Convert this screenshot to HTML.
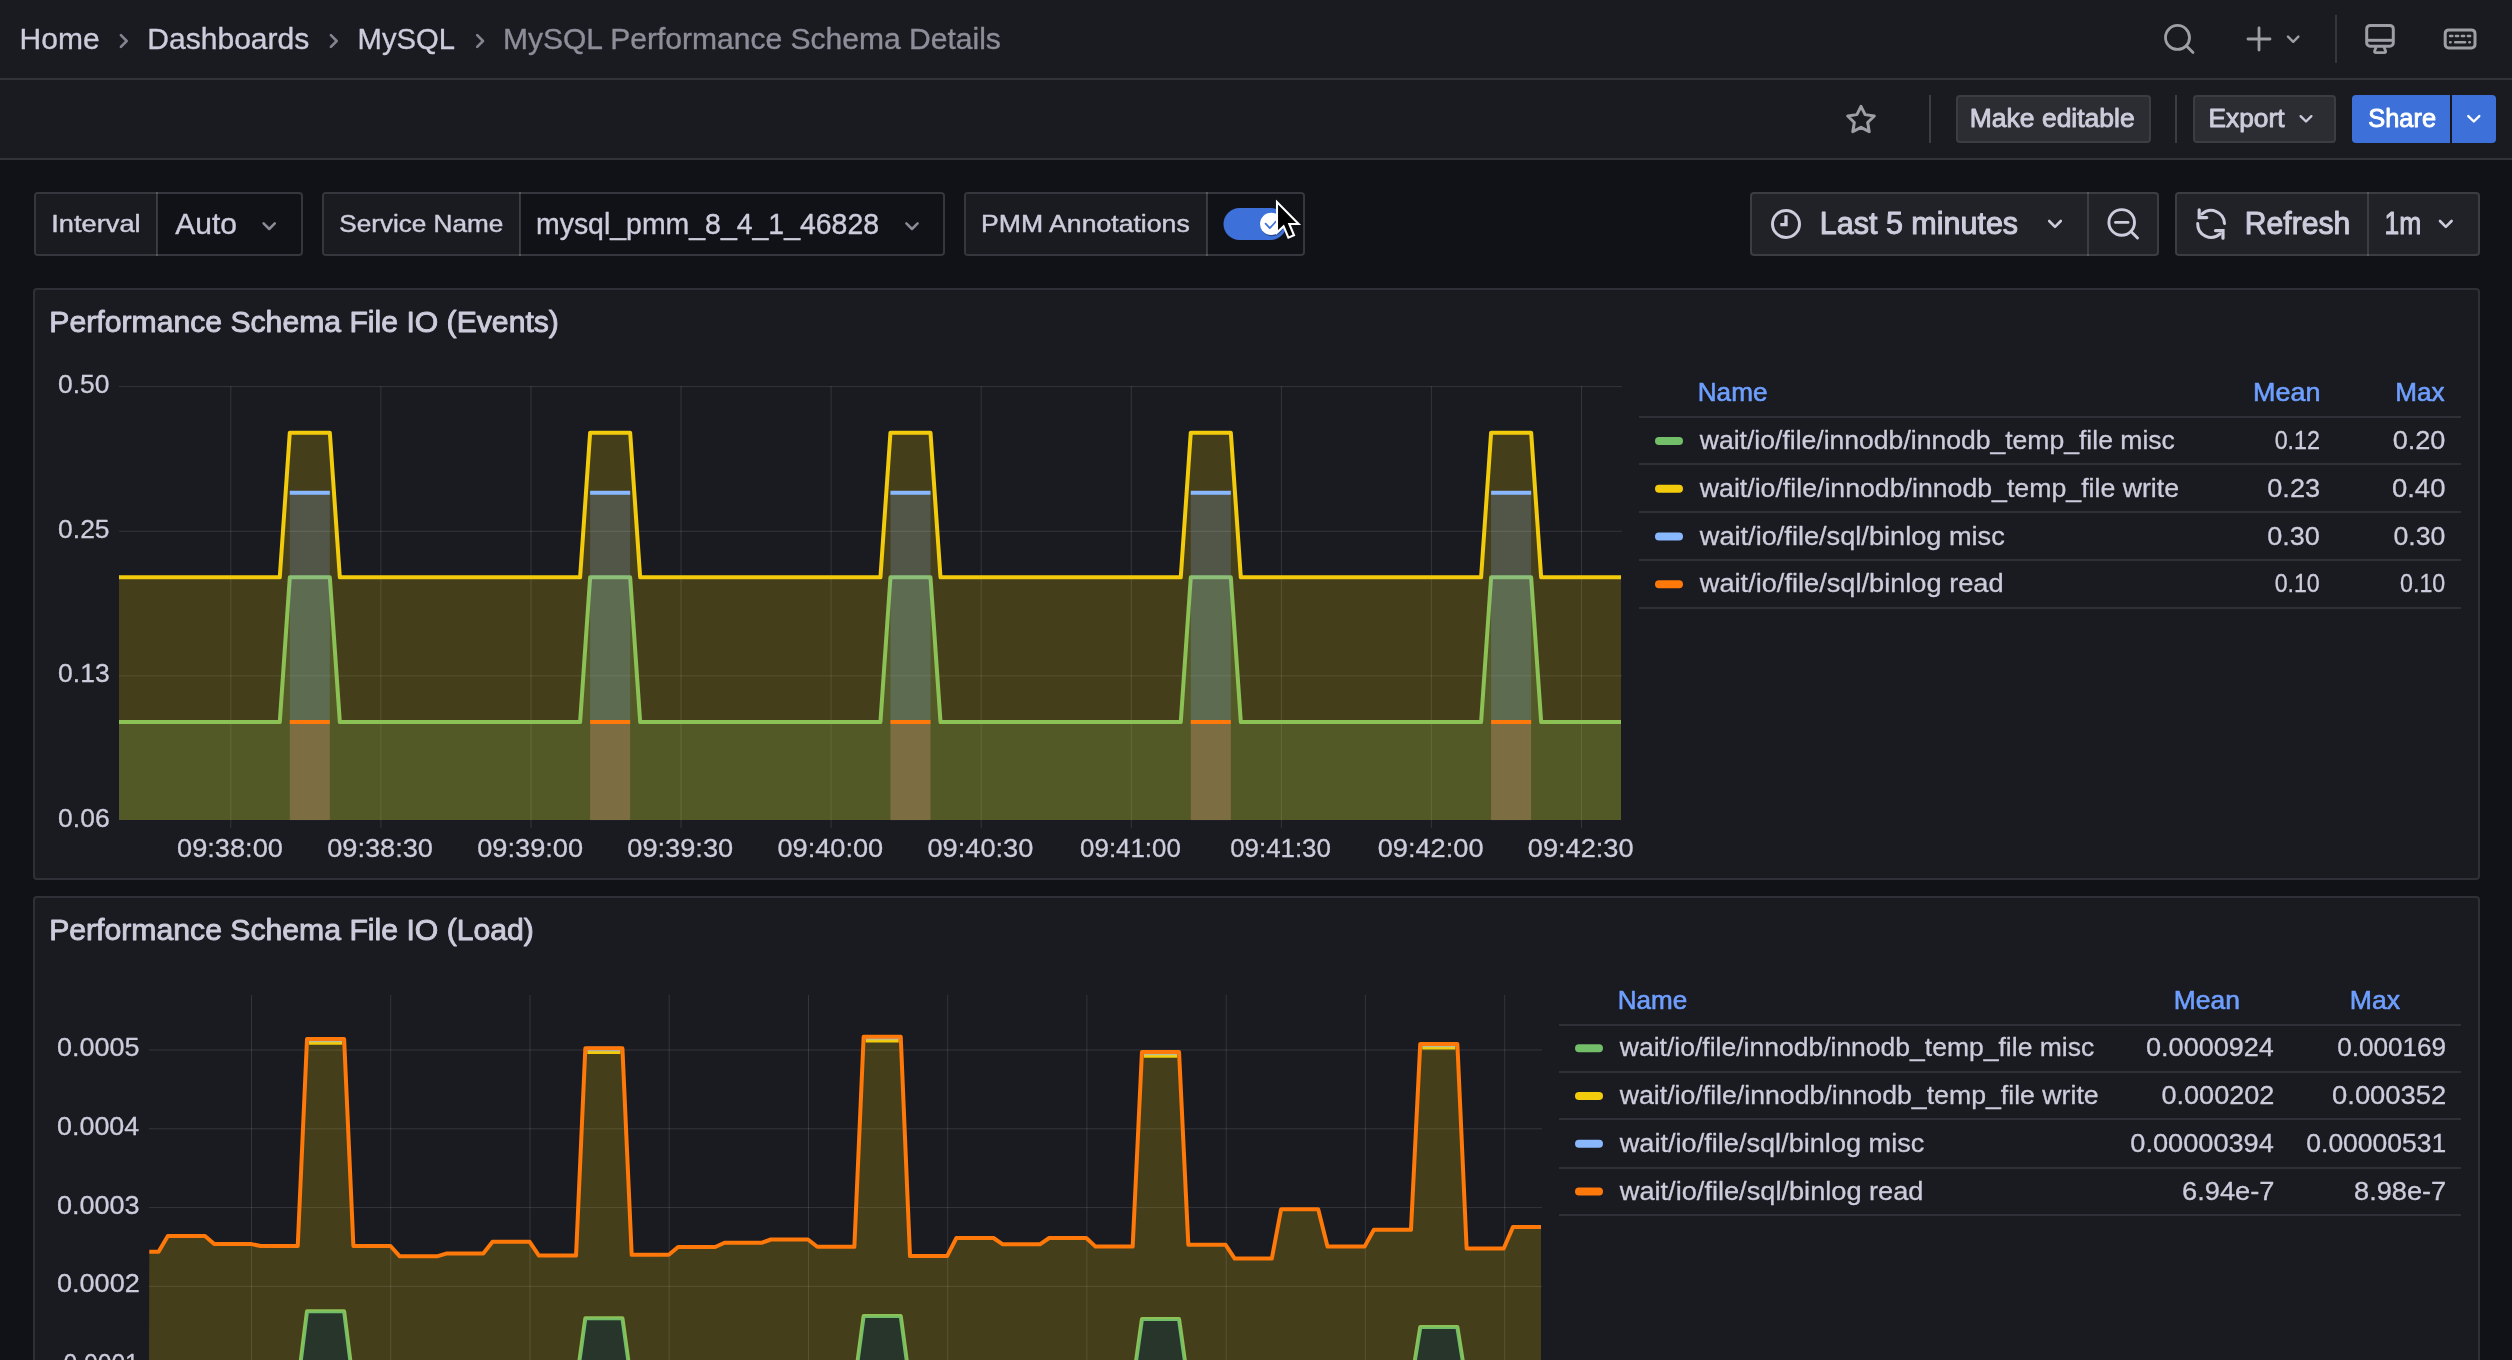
<!DOCTYPE html>
<html><head><meta charset="utf-8"><title>MySQL Performance Schema Details</title>
<style>
html,body{margin:0;padding:0;width:2512px;height:1360px;overflow:hidden;background:#111217;font-family:"Liberation Sans",sans-serif}
.a{position:absolute}
svg{position:absolute;left:0;top:0;will-change:transform}
text{font-family:"Liberation Sans",sans-serif}
</style></head><body>
<div class="a" style="left:0.0px;top:0.0px;width:2512.0px;height:78.0px;background:#1a1b20;"></div>
<div class="a" style="left:0.0px;top:78.0px;width:2512.0px;height:2.0px;background:#323339;"></div>
<div class="a" style="left:0.0px;top:80.0px;width:2512.0px;height:78.0px;background:#1a1b20;"></div>
<div class="a" style="left:0.0px;top:158.0px;width:2512.0px;height:2.0px;background:#323339;"></div>
<div class="a" style="left:2335.0px;top:15.0px;width:1.5px;height:48.0px;background:rgba(204,204,220,0.16);"></div>
<div class="a" style="left:1929.0px;top:95.0px;width:2.0px;height:48.0px;background:rgba(204,204,220,0.2);"></div>
<div class="a" style="left:1955.5px;top:95.0px;width:195.0px;height:48.0px;background:#2b2d32;border:2px solid rgba(204,204,220,0.10);box-sizing:border-box;border-radius:4px;"></div>
<div class="a" style="left:2175.0px;top:95.0px;width:2.0px;height:48.0px;background:rgba(204,204,220,0.2);"></div>
<div class="a" style="left:2193.0px;top:95.0px;width:143.0px;height:48.0px;background:#2b2d32;border:2px solid rgba(204,204,220,0.10);box-sizing:border-box;border-radius:4px;"></div>
<div class="a" style="left:2352.0px;top:95.0px;width:144.0px;height:48.0px;background:#3d71d9;border-radius:4px;"></div>
<div class="a" style="left:2450.0px;top:95.0px;width:2.0px;height:48.0px;background:#16181d;"></div>
<div class="a" style="left:34.0px;top:192.0px;width:269.0px;height:64.0px;background:#111217;border:2px solid rgba(204,204,220,0.2);box-sizing:border-box;border-radius:4px;"></div>
<div class="a" style="left:36.0px;top:194.0px;width:121.0px;height:60.0px;background:#1a1b20;border-radius:3px 0 0 3px;"></div>
<div class="a" style="left:156.0px;top:192.0px;width:2.0px;height:64.0px;background:rgba(204,204,220,0.2);"></div>
<div class="a" style="left:321.6px;top:192.0px;width:623.6px;height:64.0px;background:#111217;border:2px solid rgba(204,204,220,0.2);box-sizing:border-box;border-radius:4px;"></div>
<div class="a" style="left:323.6px;top:194.0px;width:196.4px;height:60.0px;background:#1a1b20;border-radius:3px 0 0 3px;"></div>
<div class="a" style="left:519.0px;top:192.0px;width:2.0px;height:64.0px;background:rgba(204,204,220,0.2);"></div>
<div class="a" style="left:964.3px;top:192.0px;width:341.1px;height:64.0px;background:#111217;border:2px solid rgba(204,204,220,0.2);box-sizing:border-box;border-radius:4px;"></div>
<div class="a" style="left:966.3px;top:194.0px;width:240.4px;height:60.0px;background:#1a1b20;border-radius:3px 0 0 3px;"></div>
<div class="a" style="left:1205.7px;top:192.0px;width:2.0px;height:64.0px;background:rgba(204,204,220,0.2);"></div>
<div class="a" style="left:1750.0px;top:192.0px;width:409.0px;height:64.0px;background:#202227;border:2px solid rgba(204,204,220,0.16);box-sizing:border-box;border-radius:4px;"></div>
<div class="a" style="left:2087.0px;top:192.0px;width:2.0px;height:64.0px;background:rgba(204,204,220,0.16);"></div>
<div class="a" style="left:2175.0px;top:192.0px;width:305.0px;height:64.0px;background:#202227;border:2px solid rgba(204,204,220,0.16);box-sizing:border-box;border-radius:4px;"></div>
<div class="a" style="left:2367.0px;top:192.0px;width:2.0px;height:64.0px;background:rgba(204,204,220,0.16);"></div>
<div class="a" style="left:33.0px;top:288.0px;width:2447.0px;height:592.0px;background:#1a1b20;border:2px solid rgba(204,204,220,0.12);box-sizing:border-box;border-radius:4px;"></div>
<div class="a" style="left:33.0px;top:896.0px;width:2447.0px;height:504.0px;background:#1a1b20;border:2px solid rgba(204,204,220,0.12);box-sizing:border-box;border-radius:4px;"></div>
<div class="a" style="left:1639.0px;top:415.5px;width:822.0px;height:2.0px;background:rgba(204,204,220,0.12);"></div>
<div class="a" style="left:1639.0px;top:463.2px;width:822.0px;height:2.0px;background:rgba(204,204,220,0.12);"></div>
<div class="a" style="left:1639.0px;top:511.0px;width:822.0px;height:2.0px;background:rgba(204,204,220,0.12);"></div>
<div class="a" style="left:1639.0px;top:559.0px;width:822.0px;height:2.0px;background:rgba(204,204,220,0.12);"></div>
<div class="a" style="left:1639.0px;top:607.0px;width:822.0px;height:2.0px;background:rgba(204,204,220,0.12);"></div>
<div class="a" style="left:1559.0px;top:1023.8px;width:902.0px;height:2.0px;background:rgba(204,204,220,0.12);"></div>
<div class="a" style="left:1559.0px;top:1070.5px;width:902.0px;height:2.0px;background:rgba(204,204,220,0.12);"></div>
<div class="a" style="left:1559.0px;top:1118.4px;width:902.0px;height:2.0px;background:rgba(204,204,220,0.12);"></div>
<div class="a" style="left:1559.0px;top:1166.7px;width:902.0px;height:2.0px;background:rgba(204,204,220,0.12);"></div>
<div class="a" style="left:1559.0px;top:1214.2px;width:902.0px;height:2.0px;background:rgba(204,204,220,0.12);"></div>
<svg width="2512" height="1360" viewBox="0 0 2512 1360">
<text x="19.62" y="48.90" font-size="30.00" fill="#ccccdc" stroke="#ccccdc" stroke-width="0.35" stroke-linejoin="round" textLength="79.94" lengthAdjust="spacingAndGlyphs">Home</text>
<text x="147.31" y="48.90" font-size="30.00" fill="#ccccdc" stroke="#ccccdc" stroke-width="0.35" stroke-linejoin="round" textLength="162.00" lengthAdjust="spacingAndGlyphs">Dashboards</text>
<text x="357.58" y="48.90" font-size="30.00" fill="#ccccdc" stroke="#ccccdc" stroke-width="0.35" stroke-linejoin="round" textLength="97.42" lengthAdjust="spacingAndGlyphs">MySQL</text>
<text x="502.92" y="48.90" font-size="30.00" fill="#8e8e9a" stroke="#8e8e9a" stroke-width="0.35" stroke-linejoin="round" textLength="497.99" lengthAdjust="spacingAndGlyphs">MySQL Performance Schema Details</text>
<path d="M120.9 35.2 L126.7 41 L120.9 46.8" fill="none" stroke="rgba(204,204,220,0.6)" stroke-width="2.6" stroke-linecap="round" stroke-linejoin="round"/>
<path d="M330.9 35.2 L336.7 41 L330.9 46.8" fill="none" stroke="rgba(204,204,220,0.6)" stroke-width="2.6" stroke-linecap="round" stroke-linejoin="round"/>
<path d="M477.2 35.2 L483.0 41 L477.2 46.8" fill="none" stroke="rgba(204,204,220,0.6)" stroke-width="2.6" stroke-linecap="round" stroke-linejoin="round"/>
<circle cx="2177.5" cy="37.4" r="12" fill="none" stroke="#9d9ea6" stroke-width="2.8"/>
<path d="M2186.5 46 L2193 52.5" stroke="#9d9ea6" stroke-width="2.8" stroke-linecap="round"/>
<path d="M2259 28 V50 M2248 39 H2270" stroke="#9d9ea6" stroke-width="2.8" stroke-linecap="round"/>
<path d="M2288 36.6 L2293.2 41.8 L2298.4 36.6" fill="none" stroke="#9d9ea6" stroke-width="2.4" stroke-linecap="round" stroke-linejoin="round"/>
<rect x="2366.7" y="25.4" width="26.6" height="20.9" rx="3.5" fill="none" stroke="#9d9ea6" stroke-width="3"/>
<path d="M2367.5 40.3 H2392.5" stroke="#9d9ea6" stroke-width="3"/>
<path d="M2376.2 47 L2374.6 51 Q2374.2 52.6 2375.8 52.6 H2384.4 Q2386 52.6 2385.6 51 L2384 47" fill="none" stroke="#9d9ea6" stroke-width="2.8" stroke-linejoin="round"/>
<rect x="2445.2" y="29.9" width="29.8" height="18" rx="3.5" fill="none" stroke="#9d9ea6" stroke-width="3"/>
<path d="M2450.1 36 H2452.3" stroke="#9d9ea6" stroke-width="2.6" stroke-linecap="round"/>
<path d="M2455.9 36 H2458.1" stroke="#9d9ea6" stroke-width="2.6" stroke-linecap="round"/>
<path d="M2461.9 36 H2464.1" stroke="#9d9ea6" stroke-width="2.6" stroke-linecap="round"/>
<path d="M2467.9 36 H2470.1" stroke="#9d9ea6" stroke-width="2.6" stroke-linecap="round"/>
<path d="M2450.2 42.2 H2450.6 M2455.2 42.2 H2465.1 M2469.4 42.2 H2469.8" stroke="#9d9ea6" stroke-width="2.6" stroke-linecap="round"/>
<polygon points="1861.00,106.30 1865.11,114.64 1874.31,115.97 1867.66,122.46 1869.23,131.63 1861.00,127.30 1852.77,131.63 1854.34,122.46 1847.69,115.97 1856.89,114.64" fill="none" stroke="#9d9ea6" stroke-width="3" stroke-linejoin="round"/>
<text x="1969.78" y="127.10" font-size="26.50" fill="#ccccdc" stroke="#ccccdc" stroke-width="0.90" stroke-linejoin="round" textLength="164.95" lengthAdjust="spacingAndGlyphs">Make editable</text>
<text x="2208.59" y="127.10" font-size="26.50" fill="#ccccdc" stroke="#ccccdc" stroke-width="0.90" stroke-linejoin="round" textLength="75.95" lengthAdjust="spacingAndGlyphs">Export</text>
<path d="M2300.6 116.1 L2306 121.5 L2311.4 116.1" fill="none" stroke="#ccccdc" stroke-width="2.3" stroke-linecap="round" stroke-linejoin="round"/>
<text x="2368.30" y="127.10" font-size="26.50" fill="#ffffff" stroke="#ffffff" stroke-width="0.90" stroke-linejoin="round" textLength="67.78" lengthAdjust="spacingAndGlyphs">Share</text>
<path d="M2468.3 116.1 L2473.8 121.5 L2479.3 116.1" fill="none" stroke="#ffffff" stroke-width="2.4" stroke-linecap="round" stroke-linejoin="round"/>
<text x="51.31" y="232.10" font-size="24.80" fill="#ccccdc" stroke="#ccccdc" stroke-width="0.45" stroke-linejoin="round" textLength="89.28" lengthAdjust="spacingAndGlyphs">Interval</text>
<text x="175.34" y="233.70" font-size="30.40" fill="#ccccdc" stroke="#ccccdc" stroke-width="0.40" stroke-linejoin="round" textLength="61.72" lengthAdjust="spacingAndGlyphs">Auto</text>
<path d="M263.60 223.40 L269.20 229.00 L274.80 223.40" fill="none" stroke="rgba(204,204,220,0.65)" stroke-width="2.50" stroke-linecap="round" stroke-linejoin="round"/>
<text x="339.24" y="232.20" font-size="24.80" fill="#ccccdc" stroke="#ccccdc" stroke-width="0.45" stroke-linejoin="round" textLength="164.10" lengthAdjust="spacingAndGlyphs">Service Name</text>
<text x="536.01" y="233.70" font-size="30.40" fill="#ccccdc" stroke="#ccccdc" stroke-width="0.40" stroke-linejoin="round" textLength="343.02" lengthAdjust="spacingAndGlyphs">mysql_pmm_8_4_1_46828</text>
<path d="M906.40 223.40 L912.00 229.00 L917.60 223.40" fill="none" stroke="rgba(204,204,220,0.65)" stroke-width="2.50" stroke-linecap="round" stroke-linejoin="round"/>
<text x="981.06" y="232.20" font-size="24.80" fill="#ccccdc" stroke="#ccccdc" stroke-width="0.45" stroke-linejoin="round" textLength="208.67" lengthAdjust="spacingAndGlyphs">PMM Annotations</text>
<rect x="1223.5" y="208" width="63" height="32" rx="16" fill="#3d71d9"/>
<circle cx="1272" cy="225" r="11.3" fill="rgba(0,0,0,0.35)"/>
<circle cx="1271.2" cy="223.9" r="11.1" fill="#ffffff"/>
<path d="M1265.6 223.7 L1269.8 228.2 L1275.9 221.5" fill="none" stroke="#3d71d9" stroke-width="1.8" stroke-linecap="round" stroke-linejoin="round"/>
<path d="M1277 202 L1277 232.5 L1283.6 226.2 L1288.4 237.6 L1294 235.3 L1289.3 224 L1298.6 224 Z" fill="#000" stroke="#fff" stroke-width="2.1" stroke-linejoin="miter"/>
<circle cx="1786" cy="224" r="13.5" fill="none" stroke="#ccccdc" stroke-width="3"/>
<path d="M1786 215.3 V224.6 H1780.3" fill="none" stroke="#ccccdc" stroke-width="3.3" stroke-linecap="butt" stroke-linejoin="miter"/>
<text x="1819.80" y="234.10" font-size="30.60" fill="#ccccdc" stroke="#ccccdc" stroke-width="1.00" stroke-linejoin="round" textLength="198.30" lengthAdjust="spacingAndGlyphs">Last 5 minutes</text>
<path d="M2049.20 221.00 L2055.00 226.80 L2060.80 221.00" fill="none" stroke="#ccccdc" stroke-width="2.60" stroke-linecap="round" stroke-linejoin="round"/>
<circle cx="2121.7" cy="222.4" r="12.8" fill="none" stroke="#ccccdc" stroke-width="2.9"/>
<path d="M2115.5 222.4 H2128" stroke="#ccccdc" stroke-width="2.9" stroke-linecap="round"/>
<path d="M2131 231.5 L2137.5 238" stroke="#ccccdc" stroke-width="2.9" stroke-linecap="round"/>
<path d="M2202.13 213.94 A13.4 13.4 0 0 1 2224.49 223.43" fill="none" stroke="#ccccdc" stroke-width="3" stroke-linecap="round"/>
<path d="M2197.71 223.43 A13.4 13.4 0 0 0 2220.07 233.86" fill="none" stroke="#ccccdc" stroke-width="3" stroke-linecap="round"/>
<path d="M2199.2 209.8 V217.6 H2206.8" fill="none" stroke="#ccccdc" stroke-width="3.2" stroke-linecap="round" stroke-linejoin="miter"/>
<path d="M2215.5 230.6 H2223 V238.2" fill="none" stroke="#ccccdc" stroke-width="3.2" stroke-linecap="round" stroke-linejoin="miter"/>
<text x="2244.83" y="234.10" font-size="30.60" fill="#ccccdc" stroke="#ccccdc" stroke-width="1.00" stroke-linejoin="round" textLength="105.53" lengthAdjust="spacingAndGlyphs">Refresh</text>
<text x="2384.48" y="234.10" font-size="30.60" fill="#ccccdc" stroke="#ccccdc" stroke-width="1.00" stroke-linejoin="round" textLength="36.76" lengthAdjust="spacingAndGlyphs">1m</text>
<path d="M2440.00 221.00 L2445.80 226.80 L2451.60 221.00" fill="none" stroke="#ccccdc" stroke-width="2.60" stroke-linecap="round" stroke-linejoin="round"/>
<text x="49.38" y="331.60" font-size="29.50" fill="#ccccdc" stroke="#ccccdc" stroke-width="0.90" stroke-linejoin="round" textLength="509.54" lengthAdjust="spacingAndGlyphs">Performance Schema File IO (Events)</text>
<text x="49.17" y="939.60" font-size="29.50" fill="#ccccdc" stroke="#ccccdc" stroke-width="0.90" stroke-linejoin="round" textLength="484.75" lengthAdjust="spacingAndGlyphs">Performance Schema File IO (Load)</text>
<g><path d="M119 386.6 H1622" stroke="rgba(204,204,220,0.15)" stroke-width="1"/><path d="M119 531.3 H1622" stroke="rgba(204,204,220,0.15)" stroke-width="1"/><path d="M119 675.9 H1622" stroke="rgba(204,204,220,0.15)" stroke-width="1"/><path d="M230.8 386.1 V828" stroke="rgba(204,204,220,0.15)" stroke-width="1"/><path d="M380.9 386.1 V828" stroke="rgba(204,204,220,0.15)" stroke-width="1"/><path d="M531.0 386.1 V828" stroke="rgba(204,204,220,0.15)" stroke-width="1"/><path d="M681.0 386.1 V828" stroke="rgba(204,204,220,0.15)" stroke-width="1"/><path d="M831.1 386.1 V828" stroke="rgba(204,204,220,0.15)" stroke-width="1"/><path d="M981.2 386.1 V828" stroke="rgba(204,204,220,0.15)" stroke-width="1"/><path d="M1131.3 386.1 V828" stroke="rgba(204,204,220,0.15)" stroke-width="1"/><path d="M1281.4 386.1 V828" stroke="rgba(204,204,220,0.15)" stroke-width="1"/><path d="M1431.4 386.1 V828" stroke="rgba(204,204,220,0.15)" stroke-width="1"/><path d="M1581.5 386.1 V828" stroke="rgba(204,204,220,0.15)" stroke-width="1"/><path d="M119.00 722.01 L279.78 722.01 L289.79 577.34 L329.83 577.34 L339.84 722.01 L580.11 722.01 L590.12 577.34 L630.16 577.34 L640.17 722.01 L880.44 722.01 L890.45 577.34 L930.49 577.34 L940.50 722.01 L1180.77 722.01 L1190.78 577.34 L1230.82 577.34 L1240.83 722.01 L1481.10 722.01 L1491.11 577.34 L1531.15 577.34 L1541.16 722.01 L1621.00 722.01 L1621 820.1 L119 820.1 Z" fill="rgba(115,191,105,0.200)"/><path d="M119.00 722.01 L279.78 722.01 L289.79 577.34 L329.83 577.34 L339.84 722.01 L580.11 722.01 L590.12 577.34 L630.16 577.34 L640.17 722.01 L880.44 722.01 L890.45 577.34 L930.49 577.34 L940.50 722.01 L1180.77 722.01 L1190.78 577.34 L1230.82 577.34 L1240.83 722.01 L1481.10 722.01 L1491.11 577.34 L1531.15 577.34 L1541.16 722.01 L1621.00 722.01" fill="none" stroke="#73BF69" stroke-width="4" stroke-linejoin="round"/><path d="M119.00 577.34 L279.78 577.34 L289.79 432.67 L329.83 432.67 L339.84 577.34 L580.11 577.34 L590.12 432.67 L630.16 432.67 L640.17 577.34 L880.44 577.34 L890.45 432.67 L930.49 432.67 L940.50 577.34 L1180.77 577.34 L1190.78 432.67 L1230.82 432.67 L1240.83 577.34 L1481.10 577.34 L1491.11 432.67 L1531.15 432.67 L1541.16 577.34 L1621.00 577.34 L1621 820.1 L119 820.1 Z" fill="rgba(242,204,12,0.200)"/><path d="M119.00 577.34 L279.78 577.34 L289.79 432.67 L329.83 432.67 L339.84 577.34 L580.11 577.34 L590.12 432.67 L630.16 432.67 L640.17 577.34 L880.44 577.34 L890.45 432.67 L930.49 432.67 L940.50 577.34 L1180.77 577.34 L1190.78 432.67 L1230.82 432.67 L1240.83 577.34 L1481.10 577.34 L1491.11 432.67 L1531.15 432.67 L1541.16 577.34 L1621.00 577.34" fill="none" stroke="#F2CC0C" stroke-width="4" stroke-linejoin="round"/><rect x="289.79" y="492.71" width="40.04" height="327.39" fill="rgba(138,184,255,0.200)"/><path d="M289.79 492.71 H329.83" stroke="#8AB8FF" stroke-width="4"/><rect x="590.12" y="492.71" width="40.04" height="327.39" fill="rgba(138,184,255,0.200)"/><path d="M590.12 492.71 H630.16" stroke="#8AB8FF" stroke-width="4"/><rect x="890.45" y="492.71" width="40.04" height="327.39" fill="rgba(138,184,255,0.200)"/><path d="M890.45 492.71 H930.49" stroke="#8AB8FF" stroke-width="4"/><rect x="1190.78" y="492.71" width="40.04" height="327.39" fill="rgba(138,184,255,0.200)"/><path d="M1190.78 492.71 H1230.82" stroke="#8AB8FF" stroke-width="4"/><rect x="1491.11" y="492.71" width="40.04" height="327.39" fill="rgba(138,184,255,0.200)"/><path d="M1491.11 492.71 H1531.15" stroke="#8AB8FF" stroke-width="4"/><rect x="289.79" y="722.01" width="40.04" height="98.09" fill="rgba(255,120,10,0.200)"/><path d="M289.79 722.01 H329.83" stroke="#FF780A" stroke-width="4"/><rect x="590.12" y="722.01" width="40.04" height="98.09" fill="rgba(255,120,10,0.200)"/><path d="M590.12 722.01 H630.16" stroke="#FF780A" stroke-width="4"/><rect x="890.45" y="722.01" width="40.04" height="98.09" fill="rgba(255,120,10,0.200)"/><path d="M890.45 722.01 H930.49" stroke="#FF780A" stroke-width="4"/><rect x="1190.78" y="722.01" width="40.04" height="98.09" fill="rgba(255,120,10,0.200)"/><path d="M1190.78 722.01 H1230.82" stroke="#FF780A" stroke-width="4"/><rect x="1491.11" y="722.01" width="40.04" height="98.09" fill="rgba(255,120,10,0.200)"/><path d="M1491.11 722.01 H1531.15" stroke="#FF780A" stroke-width="4"/></g>
<text x="58.12" y="392.90" font-size="25.00" fill="#ccccdc" stroke="#ccccdc" stroke-width="0.30" stroke-linejoin="round" textLength="51.36" lengthAdjust="spacingAndGlyphs">0.50</text>
<text x="58.12" y="537.57" font-size="25.00" fill="#ccccdc" stroke="#ccccdc" stroke-width="0.30" stroke-linejoin="round" textLength="51.44" lengthAdjust="spacingAndGlyphs">0.25</text>
<text x="58.12" y="682.23" font-size="25.00" fill="#ccccdc" stroke="#ccccdc" stroke-width="0.30" stroke-linejoin="round" textLength="51.50" lengthAdjust="spacingAndGlyphs">0.13</text>
<text x="58.12" y="826.90" font-size="25.00" fill="#ccccdc" stroke="#ccccdc" stroke-width="0.30" stroke-linejoin="round" textLength="51.50" lengthAdjust="spacingAndGlyphs">0.06</text>
<text x="177.09" y="857.10" font-size="25.00" fill="#ccccdc" stroke="#ccccdc" stroke-width="0.30" stroke-linejoin="round" textLength="105.82" lengthAdjust="spacingAndGlyphs">09:38:00</text>
<text x="327.17" y="857.10" font-size="25.00" fill="#ccccdc" stroke="#ccccdc" stroke-width="0.30" stroke-linejoin="round" textLength="105.82" lengthAdjust="spacingAndGlyphs">09:38:30</text>
<text x="477.25" y="857.10" font-size="25.00" fill="#ccccdc" stroke="#ccccdc" stroke-width="0.30" stroke-linejoin="round" textLength="105.82" lengthAdjust="spacingAndGlyphs">09:39:00</text>
<text x="627.33" y="857.10" font-size="25.00" fill="#ccccdc" stroke="#ccccdc" stroke-width="0.30" stroke-linejoin="round" textLength="105.82" lengthAdjust="spacingAndGlyphs">09:39:30</text>
<text x="777.41" y="857.10" font-size="25.00" fill="#ccccdc" stroke="#ccccdc" stroke-width="0.30" stroke-linejoin="round" textLength="105.82" lengthAdjust="spacingAndGlyphs">09:40:00</text>
<text x="927.49" y="857.10" font-size="25.00" fill="#ccccdc" stroke="#ccccdc" stroke-width="0.30" stroke-linejoin="round" textLength="105.82" lengthAdjust="spacingAndGlyphs">09:40:30</text>
<text x="1080.12" y="857.10" font-size="25.00" fill="#ccccdc" stroke="#ccccdc" stroke-width="0.30" stroke-linejoin="round" textLength="100.72" lengthAdjust="spacingAndGlyphs">09:41:00</text>
<text x="1230.20" y="857.10" font-size="25.00" fill="#ccccdc" stroke="#ccccdc" stroke-width="0.30" stroke-linejoin="round" textLength="100.72" lengthAdjust="spacingAndGlyphs">09:41:30</text>
<text x="1377.73" y="857.10" font-size="25.00" fill="#ccccdc" stroke="#ccccdc" stroke-width="0.30" stroke-linejoin="round" textLength="105.82" lengthAdjust="spacingAndGlyphs">09:42:00</text>
<text x="1527.81" y="857.10" font-size="25.00" fill="#ccccdc" stroke="#ccccdc" stroke-width="0.30" stroke-linejoin="round" textLength="105.82" lengthAdjust="spacingAndGlyphs">09:42:30</text>
<text x="1697.76" y="401.00" font-size="25.50" fill="#6e9fff" stroke="#6e9fff" stroke-width="0.60" stroke-linejoin="round" textLength="69.70" lengthAdjust="spacingAndGlyphs">Name</text>
<text x="2253.09" y="401.00" font-size="25.50" fill="#6e9fff" stroke="#6e9fff" stroke-width="0.60" stroke-linejoin="round" textLength="67.36" lengthAdjust="spacingAndGlyphs">Mean</text>
<text x="2395.16" y="401.00" font-size="25.50" fill="#6e9fff" stroke="#6e9fff" stroke-width="0.60" stroke-linejoin="round" textLength="49.32" lengthAdjust="spacingAndGlyphs">Max</text>
<rect x="1655" y="436.9" width="28" height="8" rx="4" fill="#73BF69"/>
<text x="1699.79" y="449.00" font-size="25.50" fill="#ccccdc" stroke="#ccccdc" stroke-width="0.30" stroke-linejoin="round" textLength="475.06" lengthAdjust="spacingAndGlyphs">wait/io/file/innodb/innodb_temp_file misc</text>
<text x="2274.64" y="449.00" font-size="25.50" fill="#ccccdc" stroke="#ccccdc" stroke-width="0.30" stroke-linejoin="round" textLength="45.38" lengthAdjust="spacingAndGlyphs">0.12</text>
<text x="2392.69" y="449.00" font-size="25.50" fill="#ccccdc" stroke="#ccccdc" stroke-width="0.30" stroke-linejoin="round" textLength="52.72" lengthAdjust="spacingAndGlyphs">0.20</text>
<rect x="1655" y="484.7" width="28" height="8" rx="4" fill="#F2CC0C"/>
<text x="1699.79" y="496.80" font-size="25.50" fill="#ccccdc" stroke="#ccccdc" stroke-width="0.30" stroke-linejoin="round" textLength="479.25" lengthAdjust="spacingAndGlyphs">wait/io/file/innodb/innodb_temp_file write</text>
<text x="2267.29" y="496.80" font-size="25.50" fill="#ccccdc" stroke="#ccccdc" stroke-width="0.30" stroke-linejoin="round" textLength="52.75" lengthAdjust="spacingAndGlyphs">0.23</text>
<text x="2391.98" y="496.80" font-size="25.50" fill="#ccccdc" stroke="#ccccdc" stroke-width="0.30" stroke-linejoin="round" textLength="53.45" lengthAdjust="spacingAndGlyphs">0.40</text>
<rect x="1655" y="532.5" width="28" height="8" rx="4" fill="#8AB8FF"/>
<text x="1699.79" y="544.60" font-size="25.50" fill="#ccccdc" stroke="#ccccdc" stroke-width="0.30" stroke-linejoin="round" textLength="304.98" lengthAdjust="spacingAndGlyphs">wait/io/file/sql/binlog misc</text>
<text x="2267.29" y="544.60" font-size="25.50" fill="#ccccdc" stroke="#ccccdc" stroke-width="0.30" stroke-linejoin="round" textLength="52.61" lengthAdjust="spacingAndGlyphs">0.30</text>
<text x="2393.41" y="544.60" font-size="25.50" fill="#ccccdc" stroke="#ccccdc" stroke-width="0.30" stroke-linejoin="round" textLength="51.99" lengthAdjust="spacingAndGlyphs">0.30</text>
<rect x="1655" y="580.3" width="28" height="8" rx="4" fill="#FF780A"/>
<text x="1699.79" y="592.40" font-size="25.50" fill="#ccccdc" stroke="#ccccdc" stroke-width="0.30" stroke-linejoin="round" textLength="303.81" lengthAdjust="spacingAndGlyphs">wait/io/file/sql/binlog read</text>
<text x="2274.64" y="592.40" font-size="25.50" fill="#ccccdc" stroke="#ccccdc" stroke-width="0.30" stroke-linejoin="round" textLength="45.11" lengthAdjust="spacingAndGlyphs">0.10</text>
<text x="2400.04" y="592.40" font-size="25.50" fill="#ccccdc" stroke="#ccccdc" stroke-width="0.30" stroke-linejoin="round" textLength="45.21" lengthAdjust="spacingAndGlyphs">0.10</text>
<g><path d="M149 1050.0 H1542" stroke="rgba(204,204,220,0.15)" stroke-width="1"/><path d="M149 1128.8 H1542" stroke="rgba(204,204,220,0.15)" stroke-width="1"/><path d="M149 1207.6 H1542" stroke="rgba(204,204,220,0.15)" stroke-width="1"/><path d="M149 1286.4 H1542" stroke="rgba(204,204,220,0.15)" stroke-width="1"/><path d="M149 1365.2 H1542" stroke="rgba(204,204,220,0.15)" stroke-width="1"/><path d="M251.5 995 V1360" stroke="rgba(204,204,220,0.15)" stroke-width="1"/><path d="M390.7 995 V1360" stroke="rgba(204,204,220,0.15)" stroke-width="1"/><path d="M530.0 995 V1360" stroke="rgba(204,204,220,0.15)" stroke-width="1"/><path d="M669.2 995 V1360" stroke="rgba(204,204,220,0.15)" stroke-width="1"/><path d="M808.5 995 V1360" stroke="rgba(204,204,220,0.15)" stroke-width="1"/><path d="M947.7 995 V1360" stroke="rgba(204,204,220,0.15)" stroke-width="1"/><path d="M1086.9 995 V1360" stroke="rgba(204,204,220,0.15)" stroke-width="1"/><path d="M1226.2 995 V1360" stroke="rgba(204,204,220,0.15)" stroke-width="1"/><path d="M1365.4 995 V1360" stroke="rgba(204,204,220,0.15)" stroke-width="1"/><path d="M1504.7 995 V1360" stroke="rgba(204,204,220,0.15)" stroke-width="1"/><path d="M149.00 1385.00 L297.73 1385.00 L307.01 1311.20 L344.12 1311.20 L353.39 1385.00 L576.04 1385.00 L585.32 1318.30 L622.43 1318.30 L631.70 1385.00 L854.35 1385.00 L863.63 1316.00 L900.74 1316.00 L910.01 1385.00 L1132.66 1385.00 L1141.94 1319.10 L1179.05 1319.10 L1188.32 1385.00 L1410.97 1385.00 L1420.25 1327.10 L1457.36 1327.10 L1466.63 1385.00 L1541.00 1385.00 L1541 1400 L149 1400 Z" fill="rgba(115,191,105,0.160)"/><path d="M149.00 1385.00 L297.73 1385.00 L307.01 1311.20 L344.12 1311.20 L353.39 1385.00 L576.04 1385.00 L585.32 1318.30 L622.43 1318.30 L631.70 1385.00 L854.35 1385.00 L863.63 1316.00 L900.74 1316.00 L910.01 1385.00 L1132.66 1385.00 L1141.94 1319.10 L1179.05 1319.10 L1188.32 1385.00 L1410.97 1385.00 L1420.25 1327.10 L1457.36 1327.10 L1466.63 1385.00 L1541.00 1385.00" fill="none" stroke="#73BF69" stroke-width="4" stroke-linejoin="round"/><path d="M149.30 1251.70 L158.58 1251.70 L167.85 1236.00 L204.96 1236.00 L214.24 1244.10 L251.35 1244.10 L260.62 1246.00 L297.73 1246.00 L307.01 1039.10 L344.12 1039.10 L353.39 1246.00 L390.50 1246.00 L399.78 1256.30 L436.89 1256.30 L446.16 1253.60 L483.27 1253.60 L492.55 1241.80 L529.66 1241.80 L538.93 1255.60 L576.04 1255.60 L585.32 1048.30 L622.43 1048.30 L631.70 1254.80 L668.81 1254.80 L678.09 1247.00 L715.20 1247.00 L724.47 1242.80 L761.58 1242.80 L770.86 1239.50 L807.97 1239.50 L817.24 1246.80 L854.35 1246.80 L863.63 1036.80 L900.74 1036.80 L910.01 1256.10 L947.12 1256.10 L956.40 1238.00 L993.51 1238.00 L1002.78 1244.30 L1039.89 1244.30 L1049.17 1238.00 L1086.28 1238.00 L1095.55 1246.60 L1132.66 1246.60 L1141.94 1052.10 L1179.05 1052.10 L1188.32 1244.70 L1225.43 1244.70 L1234.71 1258.60 L1271.82 1258.60 L1281.09 1209.30 L1318.20 1209.30 L1327.48 1246.60 L1364.59 1246.60 L1373.86 1229.80 L1410.97 1229.80 L1420.25 1043.90 L1457.36 1043.90 L1466.63 1248.50 L1503.74 1248.50 L1513.02 1226.90 L1541.00 1226.90 L1541.00 1385.00 L1466.63 1385.00 L1457.36 1327.10 L1420.25 1327.10 L1410.97 1385.00 L1188.32 1385.00 L1179.05 1319.10 L1141.94 1319.10 L1132.66 1385.00 L910.01 1385.00 L900.74 1316.00 L863.63 1316.00 L854.35 1385.00 L631.70 1385.00 L622.43 1318.30 L585.32 1318.30 L576.04 1385.00 L353.39 1385.00 L344.12 1311.20 L307.01 1311.20 L297.73 1385.00 L149.00 1385.00 Z" fill="rgba(242,204,12,0.200)"/><path d="M309.01 1042.70 H342.12" stroke="#F2CC0C" stroke-width="4"/><rect x="308.01" y="1039.60" width="35.11" height="3.10" fill="rgba(138,184,255,0.200)"/><path d="M309.01 1039.60 H342.12" stroke="#8AB8FF" stroke-width="4"/><path d="M587.32 1051.90 H620.43" stroke="#F2CC0C" stroke-width="4"/><rect x="586.32" y="1048.80" width="35.11" height="3.10" fill="rgba(138,184,255,0.200)"/><path d="M587.32 1048.80 H620.43" stroke="#8AB8FF" stroke-width="4"/><path d="M865.63 1040.40 H898.74" stroke="#F2CC0C" stroke-width="4"/><rect x="864.63" y="1037.30" width="35.11" height="3.10" fill="rgba(138,184,255,0.200)"/><path d="M865.63 1037.30 H898.74" stroke="#8AB8FF" stroke-width="4"/><path d="M1143.94 1055.70 H1177.05" stroke="#F2CC0C" stroke-width="4"/><rect x="1142.94" y="1052.60" width="35.11" height="3.10" fill="rgba(138,184,255,0.200)"/><path d="M1143.94 1052.60 H1177.05" stroke="#8AB8FF" stroke-width="4"/><path d="M1422.25 1047.50 H1455.36" stroke="#F2CC0C" stroke-width="4"/><rect x="1421.25" y="1044.40" width="35.11" height="3.10" fill="rgba(138,184,255,0.200)"/><path d="M1422.25 1044.40 H1455.36" stroke="#8AB8FF" stroke-width="4"/><path d="M149.30 1251.70 L158.58 1251.70 L167.85 1236.00 L204.96 1236.00 L214.24 1244.10 L251.35 1244.10 L260.62 1246.00 L297.73 1246.00 L307.01 1039.10 L344.12 1039.10 L353.39 1246.00 L390.50 1246.00 L399.78 1256.30 L436.89 1256.30 L446.16 1253.60 L483.27 1253.60 L492.55 1241.80 L529.66 1241.80 L538.93 1255.60 L576.04 1255.60 L585.32 1048.30 L622.43 1048.30 L631.70 1254.80 L668.81 1254.80 L678.09 1247.00 L715.20 1247.00 L724.47 1242.80 L761.58 1242.80 L770.86 1239.50 L807.97 1239.50 L817.24 1246.80 L854.35 1246.80 L863.63 1036.80 L900.74 1036.80 L910.01 1256.10 L947.12 1256.10 L956.40 1238.00 L993.51 1238.00 L1002.78 1244.30 L1039.89 1244.30 L1049.17 1238.00 L1086.28 1238.00 L1095.55 1246.60 L1132.66 1246.60 L1141.94 1052.10 L1179.05 1052.10 L1188.32 1244.70 L1225.43 1244.70 L1234.71 1258.60 L1271.82 1258.60 L1281.09 1209.30 L1318.20 1209.30 L1327.48 1246.60 L1364.59 1246.60 L1373.86 1229.80 L1410.97 1229.80 L1420.25 1043.90 L1457.36 1043.90 L1466.63 1248.50 L1503.74 1248.50 L1513.02 1226.90 L1541.00 1226.90" fill="none" stroke="#FF780A" stroke-width="4" stroke-linejoin="round"/></g>
<text x="57.00" y="1055.90" font-size="25.00" fill="#ccccdc" stroke="#ccccdc" stroke-width="0.30" stroke-linejoin="round" textLength="82.59" lengthAdjust="spacingAndGlyphs">0.0005</text>
<text x="57.00" y="1134.70" font-size="25.00" fill="#ccccdc" stroke="#ccccdc" stroke-width="0.30" stroke-linejoin="round" textLength="82.24" lengthAdjust="spacingAndGlyphs">0.0004</text>
<text x="56.99" y="1213.50" font-size="25.00" fill="#ccccdc" stroke="#ccccdc" stroke-width="0.30" stroke-linejoin="round" textLength="82.64" lengthAdjust="spacingAndGlyphs">0.0003</text>
<text x="56.99" y="1292.30" font-size="25.00" fill="#ccccdc" stroke="#ccccdc" stroke-width="0.30" stroke-linejoin="round" textLength="82.82" lengthAdjust="spacingAndGlyphs">0.0002</text>
<text x="63.39" y="1372.10" font-size="25.00" fill="#ccccdc" stroke="#ccccdc" stroke-width="0.30" stroke-linejoin="round" textLength="75.47" lengthAdjust="spacingAndGlyphs">0.0001</text>
<text x="1617.76" y="1008.80" font-size="25.50" fill="#6e9fff" stroke="#6e9fff" stroke-width="0.60" stroke-linejoin="round" textLength="69.49" lengthAdjust="spacingAndGlyphs">Name</text>
<text x="2173.73" y="1008.80" font-size="25.50" fill="#6e9fff" stroke="#6e9fff" stroke-width="0.60" stroke-linejoin="round" textLength="66.19" lengthAdjust="spacingAndGlyphs">Mean</text>
<text x="2349.72" y="1008.80" font-size="25.50" fill="#6e9fff" stroke="#6e9fff" stroke-width="0.60" stroke-linejoin="round" textLength="50.27" lengthAdjust="spacingAndGlyphs">Max</text>
<rect x="1575" y="1044.2" width="28" height="8" rx="4" fill="#73BF69"/>
<text x="1619.79" y="1056.30" font-size="25.50" fill="#ccccdc" stroke="#ccccdc" stroke-width="0.30" stroke-linejoin="round" textLength="474.46" lengthAdjust="spacingAndGlyphs">wait/io/file/innodb/innodb_temp_file misc</text>
<text x="2146.09" y="1056.30" font-size="25.50" fill="#ccccdc" stroke="#ccccdc" stroke-width="0.30" stroke-linejoin="round" textLength="127.75" lengthAdjust="spacingAndGlyphs">0.0000924</text>
<text x="2337.13" y="1056.30" font-size="25.50" fill="#ccccdc" stroke="#ccccdc" stroke-width="0.30" stroke-linejoin="round" textLength="108.96" lengthAdjust="spacingAndGlyphs">0.000169</text>
<rect x="1575" y="1092.0" width="28" height="8" rx="4" fill="#F2CC0C"/>
<text x="1619.79" y="1104.10" font-size="25.50" fill="#ccccdc" stroke="#ccccdc" stroke-width="0.30" stroke-linejoin="round" textLength="478.85" lengthAdjust="spacingAndGlyphs">wait/io/file/innodb/innodb_temp_file write</text>
<text x="2161.49" y="1104.10" font-size="25.50" fill="#ccccdc" stroke="#ccccdc" stroke-width="0.30" stroke-linejoin="round" textLength="112.92" lengthAdjust="spacingAndGlyphs">0.000202</text>
<text x="2332.08" y="1104.10" font-size="25.50" fill="#ccccdc" stroke="#ccccdc" stroke-width="0.30" stroke-linejoin="round" textLength="114.15" lengthAdjust="spacingAndGlyphs">0.000352</text>
<rect x="1575" y="1139.8" width="28" height="8" rx="4" fill="#8AB8FF"/>
<text x="1619.79" y="1151.90" font-size="25.50" fill="#ccccdc" stroke="#ccccdc" stroke-width="0.30" stroke-linejoin="round" textLength="304.58" lengthAdjust="spacingAndGlyphs">wait/io/file/sql/binlog misc</text>
<text x="2130.29" y="1151.90" font-size="25.50" fill="#ccccdc" stroke="#ccccdc" stroke-width="0.30" stroke-linejoin="round" textLength="143.56" lengthAdjust="spacingAndGlyphs">0.00000394</text>
<text x="2306.32" y="1151.90" font-size="25.50" fill="#ccccdc" stroke="#ccccdc" stroke-width="0.30" stroke-linejoin="round" textLength="139.83" lengthAdjust="spacingAndGlyphs">0.00000531</text>
<rect x="1575" y="1187.6" width="28" height="8" rx="4" fill="#FF780A"/>
<text x="1619.79" y="1199.70" font-size="25.50" fill="#ccccdc" stroke="#ccccdc" stroke-width="0.30" stroke-linejoin="round" textLength="303.71" lengthAdjust="spacingAndGlyphs">wait/io/file/sql/binlog read</text>
<text x="2182.07" y="1199.70" font-size="25.50" fill="#ccccdc" stroke="#ccccdc" stroke-width="0.30" stroke-linejoin="round" textLength="92.35" lengthAdjust="spacingAndGlyphs">6.94e-7</text>
<text x="2354.07" y="1199.70" font-size="25.50" fill="#ccccdc" stroke="#ccccdc" stroke-width="0.30" stroke-linejoin="round" textLength="92.15" lengthAdjust="spacingAndGlyphs">8.98e-7</text>
</svg>
</body></html>
